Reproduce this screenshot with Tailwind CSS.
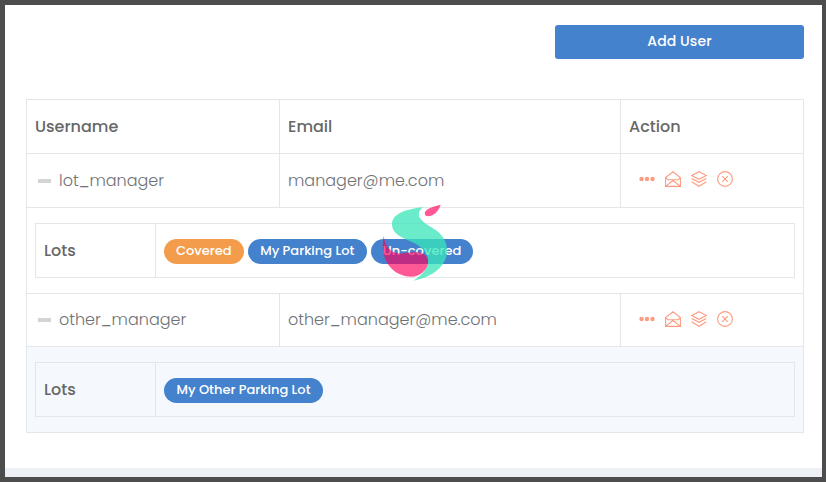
<!doctype html>
<html><head><meta charset="utf-8"><script src="https://cdn.jsdelivr.net/npm/@tailwindcss/browser@4"></script></head>
<body class="m-0 bg-white">
<div class="relative w-[826px] h-[482px] overflow-hidden border-t-[5px] border-b-[5px] border-l-[5px] border-r-[4px] border-[#4d4d4d] bg-white font-['Poppins','Inter',sans-serif] flex flex-col">
  <div class="flex-1 pt-[20px] pl-[21px] pr-[18px]">
    <div class="flex justify-end">
      <button class="w-[249px] h-[34px] pb-[2px] rounded-[3px] bg-[#4482ce] text-white text-[14px] tracking-[0.1px] font-medium">Add User</button>
    </div>
    <table class="mt-[40px] w-[777px] table-fixed border-collapse text-[16px] text-[#6c757d]">
      <colgroup><col class="w-[253px]"><col class="w-[341px]"><col class="w-[183px]"></colgroup>
      <tbody>
        <tr class="h-[54px]">
          <th class="border border-[#e4e7ea] pl-[8px] text-left font-medium text-[#676767]">Username</th>
          <th class="border border-[#e4e7ea] pl-[8px] text-left font-medium text-[#676767]">Email</th>
          <th class="border border-[#e4e7ea] pl-[8px] text-left font-medium text-[#676767]">Action</th>
        </tr>
        <tr class="h-[54px]">
          <td class="border border-[#e4e7ea] pl-[11px]"><div class="flex items-center gap-[8px]"><span class="w-[13px] h-[4px] bg-[#d4d4d4]"></span><span class="font-light text-[#6f7276]">lot_manager</span></div></td>
          <td class="border border-[#e4e7ea] pl-[8px] font-light text-[#6f7276]">manager@me.com</td>
          <td class="border border-[#e4e7ea] pl-[18px]">
            <div class="flex items-center gap-[10px] -mt-[3px] text-[#fc9c80]">
              <svg class="w-[16px] h-[16px]" viewBox="0 0 16 16" fill="currentColor"><circle cx="2.5" cy="8" r="2.2"/><circle cx="8" cy="8" r="2.2"/><circle cx="13.5" cy="8" r="2.2"/></svg>
              <svg class="w-[16px] h-[16px]" viewBox="0 0 16 16" fill="none" stroke="currentColor" stroke-width="1.1"><path d="M.6 15.400V6.500L8 .7l7.400 5.800v8.900zM3 8.800L.6 6.500M13 8.800l2.400-2.300M3 8.800h10M.6 15.400L8 9.500l7.400 5.900"/></svg>
              <svg class="w-[16px] h-[16px]" viewBox="0 0 16 16" fill="none" stroke="currentColor" stroke-width="1.1"><path d="M8 .7l7.300 3.800L8 8.300.7 4.500zM.7 7.500L8 11.300l7.300-3.800M.7 10.800L8 15.300l7.300-4.500"/></svg>
              <svg class="w-[16px] h-[16px]" viewBox="0 0 16 16" fill="none" stroke="currentColor" stroke-width="1.100"><circle cx="8" cy="8" r="7.400"/><path d="M5.200 5.200l5.600 5.600M10.800 5.200l-5.600 5.600"/></svg>
            </div>
          </td>
        </tr>
        <tr>
          <td colspan="3" class="border border-[#e4e7ea] px-[8px] pt-[15px] pb-[15px]">
            <table class="w-full table-fixed border-collapse">
              <colgroup><col class="w-[120px]"><col></colgroup>
              <tbody><tr class="h-[54px]">
                <th class="border border-[#e4e7ea] pl-[8px] text-left font-medium text-[#676767]">Lots</th>
                <td class="border border-[#e4e7ea] pl-[8px] pt-[1px]"><div class="flex items-center gap-[4px] text-[13px] font-medium text-white">
                  <span class="h-[25px] px-[12px] rounded-full bg-[#f39d4c] flex items-center">Covered</span>
                  <span class="h-[25px] px-[12.500px] rounded-full bg-[#4482ce] flex items-center">My Parking Lot</span>
                  <span class="h-[25px] px-[12px] rounded-full bg-[#4482ce] flex items-center">Un-covered</span>
                </div></td>
              </tr></tbody>
            </table>
          </td>
        </tr>
        <tr class="h-[53px]">
          <td class="border border-[#e4e7ea] pl-[11px]"><div class="flex items-center gap-[8px]"><span class="w-[13px] h-[4px] bg-[#d4d4d4]"></span><span class="font-light text-[#6f7276]">other_manager</span></div></td>
          <td class="border border-[#e4e7ea] pl-[8px] font-light text-[#6f7276]">other_manager@me.com</td>
          <td class="border border-[#e4e7ea] pl-[18px]">
            <div class="flex items-center gap-[10px] -mt-[3px] text-[#fc9c80]">
              <svg class="w-[16px] h-[16px]" viewBox="0 0 16 16" fill="currentColor"><circle cx="2.5" cy="8" r="2.2"/><circle cx="8" cy="8" r="2.2"/><circle cx="13.5" cy="8" r="2.2"/></svg>
              <svg class="w-[16px] h-[16px]" viewBox="0 0 16 16" fill="none" stroke="currentColor" stroke-width="1.1"><path d="M.6 15.400V6.500L8 .7l7.400 5.800v8.900zM3 8.800L.6 6.500M13 8.800l2.400-2.300M3 8.800h10M.6 15.400L8 9.500l7.400 5.900"/></svg>
              <svg class="w-[16px] h-[16px]" viewBox="0 0 16 16" fill="none" stroke="currentColor" stroke-width="1.1"><path d="M8 .7l7.300 3.800L8 8.300.7 4.500zM.7 7.500L8 11.300l7.300-3.800M.7 10.800L8 15.300l7.300-4.500"/></svg>
              <svg class="w-[16px] h-[16px]" viewBox="0 0 16 16" fill="none" stroke="currentColor" stroke-width="1.100"><circle cx="8" cy="8" r="7.400"/><path d="M5.200 5.200l5.600 5.600M10.800 5.200l-5.600 5.600"/></svg>
            </div>
          </td>
        </tr>
        <tr class="bg-[#f5f9fd]">
          <td colspan="3" class="border border-[#e4e7ea] px-[8px] pt-[15px] pb-[15px]">
            <table class="w-full table-fixed border-collapse">
              <colgroup><col class="w-[120px]"><col></colgroup>
              <tbody><tr class="h-[54px]">
                <th class="border border-[#e4e7ea] pl-[8px] text-left font-medium text-[#676767]">Lots</th>
                <td class="border border-[#e4e7ea] pl-[8px] pt-[1px]"><div class="flex items-center gap-[4px] text-[13px] font-medium text-white">
                  <span class="h-[25px] px-[12.500px] rounded-full bg-[#4482ce] flex items-center">My Other Parking Lot</span>
                </div></td>
              </tr></tbody>
            </table>
          </td>
        </tr>
      </tbody>
    </table>
  </div>
  <div class="h-[9px] bg-[#edf1f5]"></div>
  <svg class="absolute left-[370px] top-[195px] w-[75px] h-[85px]" viewBox="375 200 75 85">
    <path fill="#38e6b8" fill-opacity=".75" d="M423 207C410 209 392 212 392 224C392 235 404 238 414 243C424 248 429 255 428 263C427 270 420 277 413 280.700C432 277 447 267 447 250C447 238 438 231 431 227C421 221 414 215 423 207Z"/>
    <path fill="#ff005c" fill-opacity=".65" d="M383.700 236C381 248 384 262 392 269C400 277 416 280 423 272C430 266 430 256 421 253C413 250 404 255 396 253C389 251 385 245 383.700 236Z"/>
    <path fill="#ff005c" fill-opacity=".65" d="M440.700 204.700C435 206 427 208 425 212C424 216 427 216.500 430 216C435 215 439 210 440.700 204.700Z"/>
  </svg>
</div>
</body></html>
